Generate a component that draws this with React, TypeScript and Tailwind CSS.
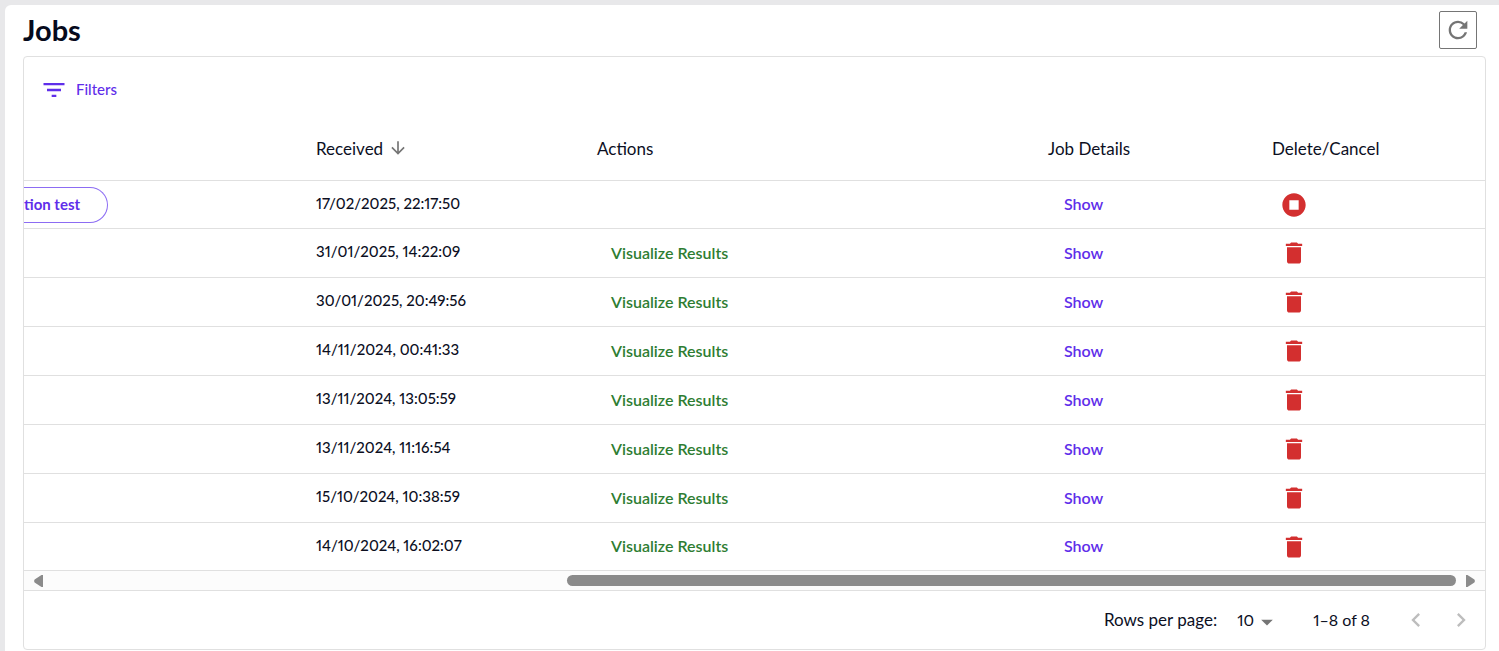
import {
    MdArrowDownward,
    MdArrowDropDown,
    MdChevronLeft,
    MdChevronRight,
    MdDelete,
    MdFilterList,
    MdRefresh,
    MdStopCircle,
} from "react-icons/md";

const jobs = [
    { received: "17/02/2025, 22:17:50", tag: "tion test", running: true },
    { received: "31/01/2025, 14:22:09" },
    { received: "30/01/2025, 20:49:56" },
    { received: "14/11/2024, 00:41:33" },
    { received: "13/11/2024, 13:05:59" },
    { received: "13/11/2024, 11:16:54" },
    { received: "15/10/2024, 10:38:59" },
    { received: "14/10/2024, 16:02:07" },
];

function JobsTable() {
    return (
        <table className="w-full min-w-[1240px] table-fixed text-left text-base text-[#0c0f1f]">
            <colgroup>
                <col className="w-[276px]" />
                <col className="w-[281px]" />
                <col />
                <col className="w-[224px]" />
                <col className="w-[229px]" />
            </colgroup>
            <thead className="text-[17px]">
                <tr className="h-[63px] border-b border-[#e0e0e0]">
                    <th></th>
                    <th className="px-4 font-normal">
                        <button className="flex items-center gap-[5px]">
                            Received
                            <MdArrowDownward className="size-5 text-[#757575]" />
                        </button>
                    </th>
                    <th className="px-4 font-normal">Actions</th>
                    <th className="px-4 font-normal">Job Details</th>
                    <th className="px-4 font-normal">Delete/Cancel</th>
                </tr>
            </thead>
            <tbody>
                {jobs.map((job) => (
                    <tr key={job.received} className="h-[49px] border-b border-[#e0e0e0] first:h-12 last:h-12 last:border-b-0">
                        <td className="pt-[2px]">
                            {job.tag && (
                                <button className="flex h-9 items-center rounded-r-full border border-l-0 border-[#8c6cf3] pb-[2px] pr-[27px] text-[15px] font-bold text-[#5f2eea]">
                                    {job.tag}
                                </button>
                            )}
                        </td>
                        <td className="px-4 pb-[2px] text-[15px] font-medium proportional-nums">{job.received}</td>
                        <td className="px-[30px]">
                            {!job.running && (
                                <button className="font-semibold text-[#2e7d32]">Visualize Results</button>
                            )}
                        </td>
                        <td className="px-8">
                            <button className="font-semibold text-[#5f2eea]">Show</button>
                        </td>
                        <td className="px-6 pt-px">
                            <button aria-label={job.running ? "Cancel" : "Delete"} className="flex text-[#d32f2f]">
                                {job.running ? <MdStopCircle className="size-7" /> : <MdDelete className="size-7" />}
                            </button>
                        </td>
                    </tr>
                ))}
            </tbody>
        </table>
    );
}

function ScrollTrack() {
    return (
        <div className="flex h-[21px] items-center gap-[10px] border-y border-[#e0e0e0] bg-[#fcfcfc] px-[10px] text-[#8b8b8b]">
            <svg viewBox="0 0 9 12" className="h-3 w-[9px]" fill="currentColor">
                <path d="M7.5 0H9V12H7.5L.6 7.4Q-.3 6 .6 4.6Z" />
            </svg>
            <div className="flex-1">
                <div className="ml-auto h-[11px] w-19/30 rounded-full bg-[#8b8b8b]"></div>
            </div>
            <svg viewBox="0 0 9 12" className="h-3 w-[9px]" fill="currentColor">
                <path d="M1.5 0H0V12H1.5L8.4 7.4Q9.3 6 8.4 4.6Z" />
            </svg>
        </div>
    );
}

function Pagination() {
    return (
        <div className="flex h-[58px] items-center justify-end pb-px pr-[10px] text-base text-[#0c0f1f] proportional-nums">
            <label htmlFor="rows" className="text-[17px]">Rows per page:</label>
            <div className="relative ml-5">
                <select id="rows" className="w-10 appearance-none" defaultValue="10">
                    <option>10</option>
                    <option>25</option>
                    <option>50</option>
                </select>
                <MdArrowDropDown className="pointer-events-none absolute -right-1 top-0 size-7 text-[#757575]" />
            </div>
            <span className="ml-9">1–8 of 8</span>
            <div className="ml-8 flex gap-[17px] text-[#bdbdbd]">
                <button aria-label="Previous page" disabled>
                    <MdChevronLeft className="size-7" />
                </button>
                <button aria-label="Next page" disabled>
                    <MdChevronRight className="size-7" />
                </button>
            </div>
        </div>
    );
}

export default function App() {
    return (
        <div className="min-h-screen bg-[#e8e8ea] pl-[5px] pt-[5px] font-['Lato','Open_Sans',sans-serif]">
            <main className="min-h-[646px] rounded-tl-md bg-white pl-[18px] pr-[13px]">
                <div className="flex h-[51px] items-center justify-between pb-[2px] pr-[9px]">
                    <h1 className="text-[29px] font-bold text-[#060a1c]">Jobs</h1>
                    <button aria-label="Refresh" className="flex size-[38px] items-center justify-center rounded-xs border border-[#757575] text-[#757575]">
                        <MdRefresh className="size-7" />
                    </button>
                </div>

                <section className="rounded border border-[#e0e0e0]">
                    <div className="flex h-[60px] items-center px-4 pt-[5px]">
                        <button className="flex items-center gap-2 text-[15px] font-medium text-[#5f2eea]">
                            <MdFilterList className="size-7" />
                            Filters
                        </button>
                    </div>
                    <div className="overflow-x-auto">
                        <JobsTable />
                    </div>
                    <ScrollTrack />
                    <Pagination />
                </section>
            </main>
        </div>
    );
}
